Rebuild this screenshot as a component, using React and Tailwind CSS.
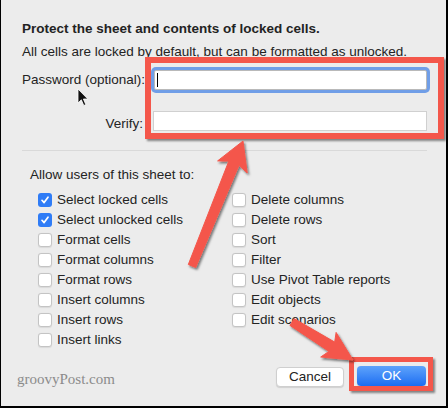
import React from "react";

const leftItems = [
  ["Select locked cells", true],
  ["Select unlocked cells", true],
  ["Format cells", false],
  ["Format columns", false],
  ["Format rows", false],
  ["Insert columns", false],
  ["Insert rows", false],
  ["Insert links", false],
];
const rightItems = [
  "Delete columns",
  "Delete rows",
  "Sort",
  "Filter",
  "Use Pivot Table reports",
  "Edit objects",
  "Edit scenarios",
];

function Check({ checked }) {
  if (checked) {
    return (
      <span className="flex h-[14px] w-[14px] shrink-0 items-center justify-center rounded-[3px] bg-[#2f7cf6]">
        <svg width="10" height="10" viewBox="0 0 10 10">
          <path d="M2 5.3 L4.1 7.6 L8 2.2" fill="none" stroke="#fff" strokeWidth="1.7" strokeLinecap="round" strokeLinejoin="round" />
        </svg>
      </span>
    );
  }
  return <span className="h-[14px] w-[14px] shrink-0 rounded-[3px] border border-[#c4c4c4] bg-white shadow-[0_0.5px_1px_rgba(0,0,0,0.08)]" />;
}

function Row({ label, checked }) {
  return (
    <div className="flex h-[20px] items-center gap-[5px]">
      <Check checked={checked} />
      <span className="leading-[16px]">{label}</span>
    </div>
  );
}

function arrowPoints(tail, tip, headL, headW, joinW, tailW, notch) {
  const dx = tip[0] - tail[0];
  const dy = tip[1] - tail[1];
  const len = Math.hypot(dx, dy);
  const ux = dx / len;
  const uy = dy / len;
  const px = -uy;
  const py = ux;
  const bx = tip[0] - headL * ux;
  const by = tip[1] - headL * uy;
  const jx = bx + notch * ux;
  const jy = by + notch * uy;
  const pts = [
    [tail[0] + tailW * px, tail[1] + tailW * py],
    [jx + joinW * px, jy + joinW * py],
    [bx + headW * px, by + headW * py],
    tip,
    [bx - headW * px, by - headW * py],
    [jx - joinW * px, jy - joinW * py],
    [tail[0] - tailW * px, tail[1] - tailW * py],
  ];
  return pts.map((p) => p[0].toFixed(1) + "," + p[1].toFixed(1)).join(" ");
}

export default function App() {
  return (
    <div
      className="relative h-[408px] w-[448px] overflow-hidden bg-[#ececec] text-[13.5px] text-[#232323] shadow-[inset_1px_0_0_#000,inset_-2px_0_0_#000,inset_0_-2px_0_#000]"
      style={{ fontFamily: '"Liberation Sans", Arial, sans-serif' }}
    >
      <div className="pl-[22px] pt-[21px]">
        <p className="text-[13.5px] font-bold leading-[16px]">Protect the sheet and contents of locked cells.</p>
        <p className="mt-[7px] leading-[16px]">All cells are locked by default, but can be formatted as unlocked.</p>

        <div className="mt-[10px] flex h-[20px] items-center">
          <span className="w-[121px] whitespace-nowrap text-right leading-[16px]">Password (optional):</span>
          <div className="relative ml-[11px] h-[20px] w-[273px] rounded-[2px] border border-[#b9b9b9] bg-white shadow-[0_0_0_3px_rgba(90,145,230,0.85)]">
            <span className="absolute left-[2px] top-[2px] h-[14px] w-[1px] bg-black" />
          </div>
        </div>

        <div className="mt-[21px] flex h-[20px] items-start">
          <span className="mt-[5px] w-[121px] text-right leading-[16px]">Verify:</span>
          <div className="ml-[10px] h-[20px] w-[274px] border border-[#d0d0d0] bg-white" />
        </div>

        <div className="mt-[19px] h-px w-[405px] bg-[#d9d9d9]" />

        <p className="ml-[8px] mt-[16px] leading-[16px]">Allow users of this sheet to:</p>

        <div className="ml-[16px] mt-[7px] flex">
          <div className="flex w-[194px] flex-col">
            {leftItems.map(([l, c]) => (
              <Row key={l} label={l} checked={c} />
            ))}
          </div>
          <div className="flex flex-col">
            {rightItems.map((l) => (
              <Row key={l} label={l} checked={false} />
            ))}
          </div>
        </div>

        <div className="mt-[16px] flex items-start justify-end pr-[22px]">
          <button className="mt-[1px] h-[20px] w-[68px] rounded-[4px] border border-[#cfcfcf] bg-white text-[13.5px] leading-[18px] text-[#222] shadow-[0_1px_1px_rgba(0,0,0,0.12)]">
            Cancel
          </button>
          <button className="ml-[13px] h-[20px] w-[69px] rounded-[4px] bg-gradient-to-b from-[#5ea3fb] to-[#1a6cf1] text-[13.5px] leading-[20px] text-white shadow-[0_1px_1px_rgba(0,0,0,0.2)]">
            OK
          </button>
        </div>
      </div>

      <span
        className="absolute left-[17px] top-[370px] text-[15px] leading-[18px] text-[#8b8b8b]"
        style={{ fontFamily: '"Liberation Serif", "Times New Roman", serif' }}
      >
        groovyPost.com
      </span>

      {/* mouse cursor */}
      <svg className="absolute left-[77px] top-[88px]" width="12" height="19" viewBox="0 0 12 19">
        <path d="M1 1 L1 15 L4.3 11.8 L6.8 17.5 L8.8 16.6 L6.4 11 L10.8 11 Z" fill="#111" stroke="#fff" strokeWidth="0.8" strokeLinejoin="round" />
      </svg>

      {/* red highlight boxes */}
      <div className="absolute left-[145px] top-[57px] h-[82px] w-[299px] border-[6px] border-[#f4574b] shadow-[2px_2px_2px_rgba(0,0,0,0.45)]" />
      <div className="absolute left-[349px] top-[357px] h-[34px] w-[84px] border-[5px] border-[#f4574b] shadow-[2px_2px_2px_rgba(0,0,0,0.45)]" />

      {/* arrows */}
      <svg className="pointer-events-none absolute left-0 top-0" width="448" height="408" viewBox="0 0 448 408">
        <defs>
          <filter id="sh" x="-20%" y="-20%" width="140%" height="140%">
            <feDropShadow dx="1.5" dy="2" stdDeviation="1.2" floodColor="#000" floodOpacity="0.5" />
          </filter>
        </defs>
        <polygon
          points={arrowPoints([192, 266], [243, 141], 28, 16, 5.5, 4, 4)}
          fill="#f4574b"
          stroke="#f4574b"
          strokeWidth="1"
          strokeLinejoin="round"
          filter="url(#sh)"
        />
        <polygon
          points={arrowPoints([292, 322], [353, 360], 29, 14.5, 5.5, 4, 4)}
          fill="#f4574b"
          stroke="#f4574b"
          strokeWidth="1"
          strokeLinejoin="round"
          filter="url(#sh)"
        />
      </svg>
    </div>
  );
}
